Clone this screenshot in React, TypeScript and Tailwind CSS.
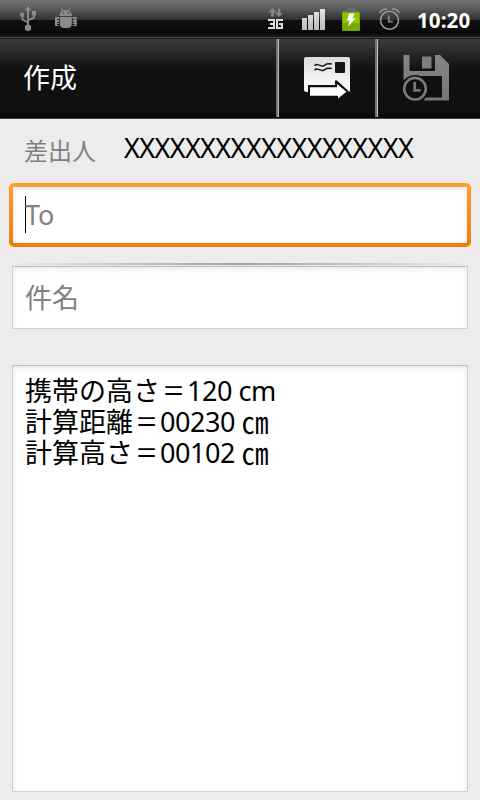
import React from "react";

const FONT = "font-['Noto_Sans','Noto_Sans_CJK_JP',sans-serif]";

function UsbIcon() {
  return (
    <svg width="18" height="26" viewBox="0 0 18 26" className="ml-[19px] mt-[6px] shrink-0" fill="none" stroke="#8b8b8b" strokeWidth="1.9">
      <path d="M9 4v18M9 16.5L3.4 13.5V9M9 14.4l6-2.7V7" />
      <path d="M9 0l3.2 4.5H5.8z" fill="#8b8b8b" stroke="none" />
      <circle cx="3.1" cy="8.8" r="2.2" fill="#8b8b8b" stroke="none" />
      <path d="M13 5h4v4.4h-4z" fill="#8b8b8b" stroke="none" />
      <circle cx="9" cy="21.8" r="3.2" fill="#8b8b8b" stroke="none" />
    </svg>
  );
}

function BugIcon() {
  return (
    <svg width="22" height="21" viewBox="0 0 22 21" className="ml-[18px] mt-[8px] shrink-0" fill="#8b8b8b">
      <path d="M4.5 8C4.5 4.5 7 2 10.7 2S17 4.5 17 8z" />
      <path d="M6.3.4l2 3M15.2.4l-2 3" stroke="#8b8b8b" strokeWidth="1.1" />
      <path d="M7.3 4.3h1.4v1.4H7.3zM12.7 4.3h1.4v1.4h-1.4z" fill="#3e3e3e" />
      <path d="M4.8 9h12v7q0 4-4.2 4H9Q4.8 20 4.8 16z" />
      <path d="M0 9h4v2H2v1h2v2H0zM0 14.8h4v1.2H2v1h2v1H0zM21.6 9h-4v2h2v1h-2v2h4zM21.6 14.8h-4v1.2h2v1h-2v1h4z" />
      <path d="M0 13h2v3H0zM19.6 13h2v3h-2z" />
    </svg>
  );
}

function NetworkIcon() {
  return (
    <svg width="17" height="22" viewBox="0 0 17 22" className="mt-[8px] shrink-0">
      <path d="M4.5 0L9 4.5H6V8.4H3V4.5H0zM11 9L7 5h2.7V.8h2.7V5H15z" fill="#858585" />
      <path d="M0 12h6v8H0M2 16h4M15 12H9v8h5v-4h-3" fill="none" stroke="#dedede" strokeWidth="2" />
    </svg>
  );
}

function SignalIcon() {
  return (
    <svg width="26" height="24" viewBox="0 0 26 24" className="ml-[16px] mt-[8px] shrink-0">
      <defs>
        <linearGradient id="signal" x2="0" y2="1">
          <stop stopColor="#e4e4e4" /><stop offset="1" stopColor="#bcbcbc" />
        </linearGradient>
      </defs>
      <path d="M1 10h5v12H1zM7 7h5v15H7zM13 4h5v18h-5zM19 1h5v21h-5z" fill="url(#signal)" />
    </svg>
  );
}

function BatteryIcon() {
  return (
    <svg width="18" height="24" viewBox="0 0 18 24" className="ml-[15px] mt-[7px] shrink-0">
      <path d="M5 3V1h8v2h4v3H1V3z" fill="#6b6b6b" />
      <rect x="0" y="5" width="18" height="19" rx="1.2" fill="#75a900" />
      <rect x="1" y="6" width="16" height="10" fill="#8cc800" />
      <path d="M7.2 6.5h5.3l-2 4.7h3.1L6 20l1.6-6.5H4.8z" fill="#fff" />
    </svg>
  );
}

function AlarmIcon() {
  return (
    <svg width="22" height="24" viewBox="0 0 22 24" className="ml-[19px] mt-[7px] shrink-0" fill="none" stroke="#979797" strokeWidth="1.6">
      <circle cx="10.5" cy="13.2" r="9" />
      <path d="M.6 6Q2.5 1.8 8 2M20.4 6Q18.5 1.8 13 2" />
      <path d="M9.8 8.6v6h4" stroke="#858585" strokeWidth="1.8" />
    </svg>
  );
}

function SendIcon() {
  return (
    <svg width="48" height="44" viewBox="0 0 48 44" className="ml-[25px] mt-[17px]">
      <defs>
        <linearGradient id="paper" x2="0" y2="1">
          <stop stopColor="#dcdcdc" /><stop offset="1" stopColor="#ffffff" />
        </linearGradient>
      </defs>
      <path d="M2 1h42q2 0 2 2v32q-1 1-3 1H4q-4 0-4-2V3q0-2 2-2z" fill="url(#paper)" />
      <path d="M4 29h27v-4.5h2L44.5 35v3L34 46h-3v-5H4z" fill="#101010" />
      <path d="M6 31.3h27V28l9.5 7.7L34 42.5v-2.7H6z" fill="#fff" />
      <rect x="31" y="6" width="10" height="11" rx="1" fill="#151515" />
      <path d="M10.5 9.7q1.7-1.7 4-.8l3 1q2 .5 3.8-1.2 1.5-1.2 6.5-.8M10.5 14.2q1.7-1.7 4-.8l3 1q2 .5 3.8-1.2 1.5-1.2 6.5-.8" fill="none" stroke="#151515" strokeWidth="1.5" />
    </svg>
  );
}

function SaveIcon() {
  return (
    <svg width="48" height="48" viewBox="0 0 48 48" className="ml-[24px] mt-[16px]">
      <defs>
        <linearGradient id="disk" x2="0" y2="1">
          <stop stopColor="#858585" /><stop offset="1" stopColor="#777777" />
        </linearGradient>
      </defs>
      <path fillRule="evenodd" d="M1.5 0h6v16H33V0h5l9 9v36.5H22l1-3h17V21H9L1.5 25z" fill="url(#disk)" />
      <rect x="20" y="1.5" width="9.5" height="12" fill="#7e7e7e" />
      <circle cx="13" cy="33.7" r="13.8" fill="#101010" />
      <circle cx="13" cy="33.7" r="10.8" fill="none" stroke="#7b7b7b" strokeWidth="2.6" />
      <path d="M12.7 27v8.3h6" fill="none" stroke="#777" strokeWidth="2.8" />
    </svg>
  );
}

function Separator() {
  return <div className="h-[78px] w-[3px] shrink-0 border-r border-[#c0c0c0] bg-[#747474]" />;
}

const fieldShadow = "shadow-[inset_0_5px_6px_-3px_#e8e8e8,inset_4px_0_5px_-4px_#e4e4e4,inset_-4px_0_5px_-4px_#e4e4e4]";
const fieldBorder = "border border-[#d0d0d0] border-t-[#bcbcbc]";

function BodyLine({ label, value, unit }: { label: string; value: string; unit: string }) {
  return (
    <div className="flex h-[31px] whitespace-pre">
      <span>{label}</span>
      <span className="inline-block scale-x-[0.84]">＝</span>
      <span className="tracking-[-0.45px]">{value} </span>
      {unit === "㎝" ? (
        <span className="inline-block origin-[50%_50%] scale-y-[1.1]">{unit}</span>
      ) : (
        <span className="tracking-[-0.4px]">{unit}</span>
      )}
    </div>
  );
}

export default function App() {
  return (
    <div className={`flex h-[800px] w-[480px] flex-col overflow-hidden bg-[#ececec] ${FONT}`}>
      <div className="flex h-[39px] shrink-0 items-start border-b border-[#161616] bg-[linear-gradient(180deg,#727272_0,#656565_6px,#323232_19.5px,#0f0f0f_20px,#0d0d0d_31px,#050505_32px,#1c1c1c_37px,#4a4a4a_37px)]">
        <UsbIcon />
        <BugIcon />
        <div className="grow" />
        <NetworkIcon />
        <SignalIcon />
        <BatteryIcon />
        <AlarmIcon />
        <div className="ml-[16px] mt-[7px] w-[63px] whitespace-nowrap font-['Open_Sans',sans-serif] text-[20.5px] font-bold leading-[26px] tracking-[0.1px] text-white">10:20</div>
      </div>

      <div className="flex h-[80px] shrink-0 border-b border-[#484444] bg-[linear-gradient(180deg,#3c3c3c_0,#2b2b2b_12px,#111111_31px,#101010_72px,#050505_79px)]">
        <div className="w-[276px] pl-[23px] pt-[19px] text-[27px] leading-[40px] text-white">作成</div>
        <Separator />
        <div className="w-[96px]"><SendIcon /></div>
        <Separator />
        <div className="w-[102px]"><SaveIcon /></div>
      </div>

      <div className="flex h-[64px] shrink-0">
        <div className="w-[122px] pl-[24px] pt-[14px] text-[24px] leading-[36px] text-[#808080]">差出人</div>
        <div className="whitespace-nowrap pl-[2px] pt-[9px] text-[27px] leading-[40px] tracking-[-0.6px] text-black">XXXXXXXXXXXXXXXXXXX</div>
      </div>

      <div className="mx-[9px] h-[64px] shrink-0 rounded-[5px] bg-linear-to-b from-[#ff9e2c] to-[#f37a08] p-[4px]">
        <div className={`flex h-[56px] items-start bg-white pl-[12px] pt-[9px] ${fieldShadow}`}>
          <div className="h-[37px] w-px bg-black" />
          <div className="-ml-px text-[27px] leading-[37px] text-[#808080]">To</div>
        </div>
      </div>

      <div className="mx-[9px] mt-[16px] h-[2px] shrink-0 bg-linear-to-r from-[#ececec] via-[#a0a0a0] to-[#ececec]" />

      <div className={`mx-[12px] mt-[1px] h-[63px] shrink-0 bg-white pl-[12px] pt-[11px] text-[27px] leading-[40px] text-[#808080] ${fieldBorder} ${fieldShadow}`}>件名</div>

      <div className={`mx-[12px] mt-[36px] h-[427px] shrink-0 whitespace-nowrap bg-white pl-[12px] pt-[9px] text-[27px] leading-[31px] text-black ${fieldBorder} ${fieldShadow}`}>
        <BodyLine label="携帯の高さ" value="120" unit="cm" />
        <BodyLine label="計算距離" value="00230" unit="㎝" />
        <BodyLine label="計算高さ" value="00102" unit="㎝" />
      </div>
    </div>
  );
}
